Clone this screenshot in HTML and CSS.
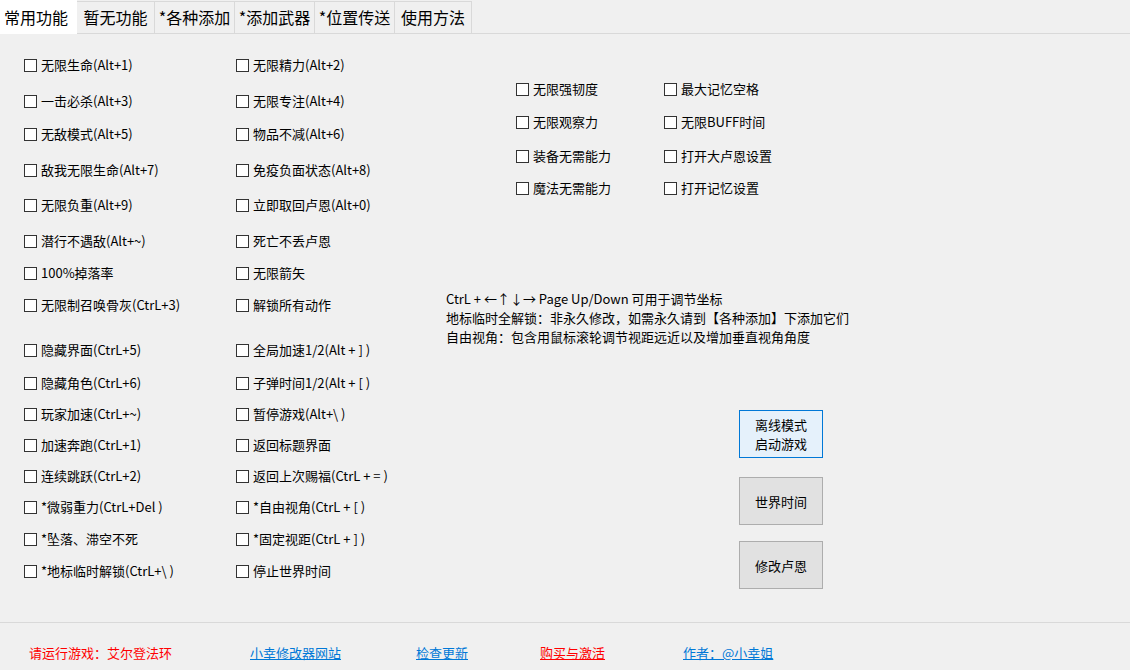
FILE: index.html
```html
<!DOCTYPE html>
<html lang="zh-CN">
<head>
<meta charset="utf-8">
<title>小幸修改器</title>
<link rel="stylesheet" href="styles.css">
</head>
<body>
<div class="app">
  <div class="tabs">
    <div class="tab active">常用功能</div>
    <div class="tab t78">暂无功能</div>
    <div class="tab">*各种添加</div>
    <div class="tab">*添加武器</div>
    <div class="tab">*位置传送</div>
    <div class="tab t77">使用方法</div>
  </div>
  <div class="main">
    <div class="left-grid">
      <label class="cb r36"><span class="box"></span>无限生命(Alt+1)</label>
      <label class="cb r36"><span class="box"></span>无限精力(Alt+2)</label>
      <label class="cb r33"><span class="box"></span>一击必杀(Alt+3)</label>
      <label class="cb r33"><span class="box"></span>无限专注(Alt+4)</label>
      <label class="cb r36"><span class="box"></span>无敌模式(Alt+5)</label>
      <label class="cb r36"><span class="box"></span>物品不减(Alt+6)</label>
      <label class="cb r35"><span class="box"></span>敌我无限生命(Alt+7)</label>
      <label class="cb r35"><span class="box"></span>免疫负面状态(Alt+8)</label>
      <label class="cb r36"><span class="box"></span>无限负重(Alt+9)</label>
      <label class="cb r36"><span class="box"></span>立即取回卢恩(Alt+0)</label>
      <label class="cb r32"><span class="box"></span>潜行不遇敌(Alt+~)</label>
      <label class="cb r32"><span class="box"></span>死亡不丢卢恩</label>
      <label class="cb r32"><span class="box"></span>100%掉落率</label>
      <label class="cb r32"><span class="box"></span>无限箭矢</label>
      <label class="cb r45"><span class="box"></span>无限制召唤骨灰(CtrL+3)</label>
      <label class="cb r45"><span class="box"></span>解锁所有动作</label>
      <label class="cb r33"><span class="box"></span>隐藏界面(CtrL+5)</label>
      <label class="cb r33"><span class="box"></span>全局加速1/2(Alt + ] )</label>
      <label class="cb r31"><span class="box"></span>隐藏角色(CtrL+6)</label>
      <label class="cb r31"><span class="box"></span>子弹时间1/2(Alt + [ )</label>
      <label class="cb r31"><span class="box"></span>玩家加速(CtrL+~)</label>
      <label class="cb r31"><span class="box"></span>暂停游戏(Alt+\ )</label>
      <label class="cb r31"><span class="box"></span>加速奔跑(CtrL+1)</label>
      <label class="cb r31"><span class="box"></span>返回标题界面</label>
      <label class="cb r31"><span class="box"></span>连续跳跃(CtrL+2)</label>
      <label class="cb r31"><span class="box"></span>返回上次赐福(CtrL + = )</label>
      <label class="cb r32"><span class="box"></span>*微弱重力(CtrL+Del )</label>
      <label class="cb r32"><span class="box"></span>*自由视角(CtrL + [ )</label>
      <label class="cb r32"><span class="box"></span>*坠落、滞空不死</label>
      <label class="cb r32"><span class="box"></span>*固定视距(CtrL + ] )</label>
      <label class="cb"><span class="box"></span>*地标临时解锁(CtrL+\ )</label>
      <label class="cb"><span class="box"></span>停止世界时间</label>
    </div>
    <div class="right">
      <div class="right-grid">
        <label class="cb r33"><span class="box"></span>无限强韧度</label>
        <label class="cb r33"><span class="box"></span>最大记忆空格</label>
        <label class="cb r34"><span class="box"></span>无限观察力</label>
        <label class="cb r34"><span class="box"></span>无限BUFF时间</label>
        <label class="cb r32"><span class="box"></span>装备无需能力</label>
        <label class="cb r32"><span class="box"></span>打开大卢恩设置</label>
        <label class="cb"><span class="box"></span>魔法无需能力</label>
        <label class="cb"><span class="box"></span>打开记忆设置</label>
      </div>
      <div class="info">
        <p>CtrL + ←↑↓→ Page Up/Down 可用于调节坐标</p>
        <p>地标临时全解锁：非永久修改，如需永久请到【各种添加】下添加它们</p>
        <p>自由视角：包含用鼠标滚轮调节视距远近以及增加垂直视角角度</p>
      </div>
      <div class="buttons">
        <button class="btn primary">离线模式<br>启动游戏</button>
        <button class="btn b2">世界时间</button>
        <button class="btn b3">修改卢恩</button>
      </div>
    </div>
  </div>
  <div class="footer">
    <span class="red">请运行游戏：艾尔登法环</span>
    <a class="link">小幸修改器网站</a>
    <a class="link">检查更新</a>
    <a class="link red">购买与激活</a>
    <a class="link">作者：@小幸姐</a>
  </div>
</div>
</body>
</html>
```

FILE: styles.css
```css
* { box-sizing: border-box; }
html, body { margin: 0; padding: 0; }
body {
  background: #f0f0f0;
  font-family: "Noto Sans CJK SC", "Microsoft YaHei", sans-serif;
  font-size: 13px;
  color: #000;
}
.app {
  width: 1130px;
  height: 670px;
  display: flex;
  flex-direction: column;
}
.tabs {
  height: 34px;
  display: flex;
  align-items: flex-end;
  border-bottom: 1px solid #d9d9d9;
  flex: none;
}
.tab {
  height: 33px;
  margin-bottom: -1px;
  padding: 0;
  width: 80px;
  border: 1px solid #d9d9d9;
  border-left: none;
  background: #f0f0f0;
  font-size: 16px;
  line-height: 31px;
  text-align: center;
  white-space: nowrap;
}
.tab.t78 { width: 78px; }
.tab.t77 { width: 77px; }
.tab.active {
  width: 77px;
  height: 34px;
  border: none;
  background: #fff;
  line-height: 34px;
  text-align: left;
  padding-left: 4px;
}
.main {
  flex: 1;
  display: flex;
}
.left-grid {
  width: 446px;
  padding: 22px 0 0 24px;
  display: grid;
  grid-template-columns: 212px 1fr;
  align-content: start;
}
.cb {
  display: flex;
  align-items: center;
  height: 18px;
  line-height: 18px;
  white-space: nowrap;
  align-self: start;
}
.r31 { margin-bottom: 13px; }
.r32 { margin-bottom: 14px; }
.r33 { margin-bottom: 15px; }
.r34 { margin-bottom: 16px; }
.r35 { margin-bottom: 17px; }
.r36 { margin-bottom: 18px; }
.r45 { margin-bottom: 27px; }
.box {
  width: 13px;
  height: 13px;
  border: 1px solid #333;
  background: #fff;
  margin-right: 4px;
  flex: none;
}
.right {
  flex: 1;
  display: flex;
  flex-direction: column;
}
.right-grid {
  margin: 46px 0 0 70px;
  display: grid;
  grid-template-columns: 148px 1fr;
}
.info {
  margin-top: 92px;
}
.info p {
  margin: 0;
  line-height: 19px;
  white-space: nowrap;
}
.buttons {
  margin: 64px 0 0 293px;
  display: flex;
  flex-direction: column;
}
.btn {
  width: 84px;
  height: 48px;
  border: 1px solid #adadad;
  background: #e1e1e1;
  font-family: inherit;
  font-size: 13px;
  line-height: 19px;
  color: #000;
  padding: 0;
}
.btn.primary {
  border-color: #0078d7;
  background: #e5f1fb;
}
.btn.b2 { margin-top: 19px; }
.btn.b3 { margin-top: 16px; }
.footer {
  height: 48px;
  flex: none;
  border-top: 1px solid #d9d9d9;
  display: grid;
  grid-template-columns: 221px 166px 124px 143px auto;
  align-items: start;
  padding: 21px 0 0 29px;
  line-height: 18px;
}
.red { color: #ff0000; }
.link {
  color: #0078d7;
  text-decoration: underline;
  justify-self: start;
}
.link.red { color: #ff0000; }
```
